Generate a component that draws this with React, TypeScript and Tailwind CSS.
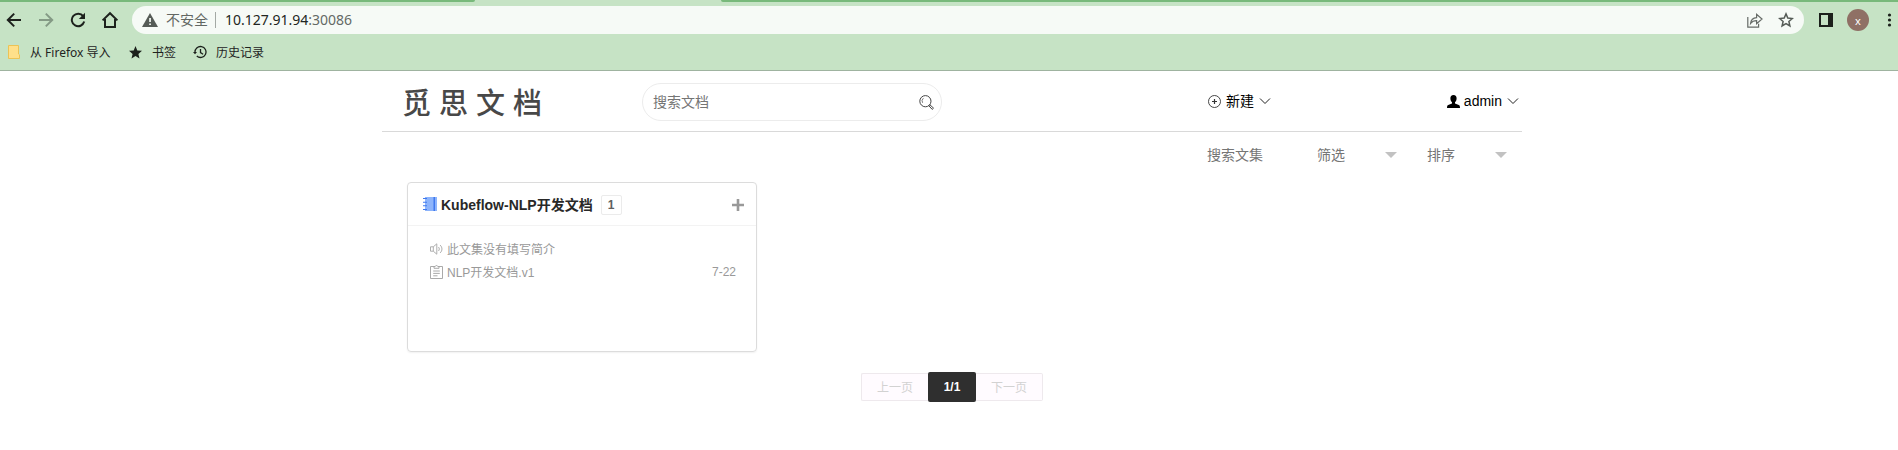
import React from "react";

type IconProps = { className?: string };

const Chevron = ({ className = "" }: IconProps) => (
  <svg className={className} width="12" height="12" viewBox="0 0 12 12" fill="none" stroke="#222" strokeWidth="1">
    <path d="M1 3.5 6 8.5 11 3.5" />
  </svg>
);

const Toolbar = () => (
  <div className="flex h-[34px] items-center pt-[6px]">
    <svg className="ml-[6px] shrink-0" width="16" height="16" viewBox="0 0 16 16" fill="none" stroke="#1c211c" strokeWidth="2">
      <path d="M15 8H2M8.2 1.6 1.8 8l6.4 6.4" />
    </svg>
    <svg className="ml-[16px] shrink-0" width="16" height="16" viewBox="0 0 16 16" fill="none" stroke="#849a85" strokeWidth="2">
      <path d="M1 8h13M7.8 1.6 14.2 8l-6.4 6.4" />
    </svg>
    <svg className="ml-[16px] shrink-0" width="16" height="16" viewBox="0 0 16 16" fill="none">
      <path d="M13.2 4.2A6.3 6.3 0 1 0 14.2 9.6" stroke="#1c211c" strokeWidth="2" />
      <path d="M15 0.8V7H8.8z" fill="#1c211c" />
    </svg>
    <svg className="ml-[15px] shrink-0" width="18" height="18" viewBox="0 0 18 18" fill="none" stroke="#1c211c" strokeWidth="2">
      <path d="M1.6 9.4 9 2.2l7.4 7.2M4 8v8h10V8" />
    </svg>
    <div className="ml-[13px] flex h-[28px] w-[1672px] shrink-0 items-center rounded-full bg-[#f6faf6]">
      <svg className="ml-[10px]" width="16" height="14" viewBox="0 0 16 14">
        <path d="M8 0 16 14H0z" fill="#555b56" />
        <path d="M7.2 5h1.7v4H7.2zM7.2 10.4h1.7V12H7.2z" fill="#f6faf6" />
      </svg>
      <span className="ml-[8px] w-[42px] whitespace-nowrap text-[14px] leading-[20px] text-[#626763]">不安全</span>
      <span className="ml-[7px] h-[16px] w-px bg-[#a3a9a4]" />
      <span className="ml-[9px] whitespace-nowrap text-[14px] leading-[20px] text-[#222622]">
        10.127.91.94<span className="text-[#646965]">:30086</span>
      </span>
      <svg className="ml-auto" width="16" height="15" viewBox="0 0 16 15" fill="none" stroke="#666b67" strokeWidth="1.2">
        <path d="M.8 4v10.2h10.8v-3.4M3.6 10.4c.4-4 2.6-5.6 6-5.8V1.4L15 6l-5.4 4.6V7.7c-2.6 0-4.4.6-6 2.7z" />
      </svg>
      <svg className="ml-[15px] mr-[10px]" width="16" height="16" viewBox="0 0 16 16" fill="none" stroke="#555b56" strokeWidth="1.5">
        <path d="m8 1.9 1.8 4.2 4.6.4-3.5 3 1 4.5L8 11.6 4.1 14l1-4.5-3.5-3 4.6-.4z" />
      </svg>
    </div>
    <svg className="ml-[15px] shrink-0" width="14" height="14" viewBox="0 0 14 14">
      <path d="M1 1h12v12H1z" fill="none" stroke="#1c211c" strokeWidth="2" />
      <path d="M9 1h4v12H9z" fill="#1c211c" />
    </svg>
    <span className="ml-[14px] flex size-[22px] shrink-0 items-center justify-center rounded-full bg-[#8f7065] text-[11px] leading-none text-white">
      x
    </span>
    <svg className="ml-[18px] shrink-0" width="5" height="14" viewBox="0 0 5 14" fill="#1c211c">
      <circle cx="2.5" cy="2" r="1.6" />
      <circle cx="2.5" cy="7" r="1.6" />
      <circle cx="2.5" cy="12" r="1.6" />
    </svg>
  </div>
);

const Bookmarks = () => (
  <div className="flex h-[36px] items-center whitespace-nowrap text-[12px] leading-[18px] text-[#1f241f]">
    <svg className="ml-[8px]" width="12" height="14" viewBox="0 0 12 14">
      <path d="M.5.5h10V9l1 .8v3.7H.5z" fill="#ffe08a" stroke="#ecc355" />
    </svg>
    <span className="ml-[10px] mt-px w-[81px]">从 Firefox 导入</span>
    <svg className="ml-[18px]" width="13" height="13" viewBox="0 0 13 13" fill="#1c211c">
      <path d="m6.5 0 1.8 4.4 4.7.4-3.6 3.1 1.1 4.6-4-2.5-4 2.5 1.1-4.6L0 4.8l4.7-.4z" />
    </svg>
    <span className="ml-[10px] mt-px w-[24px]">书签</span>
    <svg className="ml-[17px]" width="14" height="14" viewBox="0 0 14 14" fill="none" stroke="#1c211c" strokeWidth="1.3">
      <path d="M2 7.5A5.5 5.5 0 1 1 3.8 11.1M7.5 4v3.6l2.6 1.6" />
      <path d="M0 7h4L2 9.2z" fill="#1c211c" stroke="none" />
    </svg>
    <span className="ml-[9px] mt-px">历史记录</span>
  </div>
);

const Browser = () => (
  <div className="h-[71px] border-b border-[#9fb3a0] bg-[#c6e3c5] font-['Noto_Sans','Noto_Sans_CJK_SC',sans-serif]">
    <div className="-mb-[2px] flex h-[2px] justify-between">
      <div className="w-[475px] rounded-br-[3px] bg-[#78b97b]" />
      <div className="w-[1177px] rounded-bl-[3px] bg-[#78b97b]" />
    </div>
    <Toolbar />
    <Bookmarks />
  </div>
);

const Header = () => (
  <header className="flex h-[61px] items-center border-b border-[#d9d9d9] text-[14px] leading-[20px] text-black">
    <h1 className="ml-[20px] mt-[5px] w-[148px] whitespace-nowrap text-[29px] font-medium leading-[40px] tracking-[8px] text-[#484848]">
      觅思文档
    </h1>
    <div className="ml-[92px] mt-[2px] flex h-[38px] w-[300px] items-center rounded-[19px] border border-[#ececec] pl-[10px] pr-[7px] text-[#757575]">
      <span>搜索文档</span>
      <svg className="ml-auto mt-px" width="15" height="15" viewBox="0 0 15 15" fill="none" stroke="#444" strokeWidth="1">
        <circle cx="6.4" cy="6.2" r="5.6" />
        <path d="M4.4 3.2a3.6 3.6 0 0 0-.8 4.6" strokeWidth=".7" />
        <path d="m9.8 10.7 1-1 3.7 3.4-1.3 1.3z" />
      </svg>
    </div>
    <div className="ml-[266px] flex items-center">
      <svg width="13" height="13" viewBox="0 0 13 13" fill="none" stroke="#333" strokeWidth=".9">
        <circle cx="6.5" cy="6.5" r="6" />
        <path d="M6.5 4v5M4 6.5h5" strokeWidth="1.2" />
      </svg>
      <span className="ml-[5px]">新建</span>
      <Chevron className="ml-[5px]" />
    </div>
    <div className="ml-auto mr-[3px] flex items-center">
      <svg width="13" height="13" viewBox="0 0 13 13" fill="#000">
        <path d="M6.5 0C8.6 0 9.7 1.4 9.6 3.4 9.5 5 9 6.4 8 7.2v1.2l3.8 1.5c.8.3 1.2 1 1.2 3.1H0c0-2.1.4-2.8 1.2-3.1L5 8.4V7.2C4 6.4 3.5 5 3.4 3.4 3.3 1.4 4.4 0 6.5 0z" />
      </svg>
      <span className="ml-[4px]">admin</span>
      <Chevron className="ml-[5px]" />
    </div>
  </header>
);

const Select = ({ label }: { label: string }) => (
  <div className="flex w-[110px] shrink-0 items-center justify-between pr-[30px]">
    <span>{label}</span>
    <svg width="12" height="6" viewBox="0 0 12 6" fill="#c2c2c2">
      <path d="M0 0h12L6 6z" />
    </svg>
  </div>
);

const Filters = () => (
  <div className="ml-[825px] flex h-[46px] items-center text-[14px] leading-[20px] text-[#757575]">
    <span className="w-[110px] shrink-0">搜索文集</span>
    <Select label="筛选" />
    <Select label="排序" />
  </div>
);

const Card = () => (
  <section className="ml-[25px] mt-[4px] h-[170px] w-[350px] rounded-[4px] border border-[#dcdcdc] shadow-[0_1px_2px_rgba(0,0,0,0.06)]">
    <div className="flex h-[43px] items-center border-b border-[#f3f3f3] pl-[15px] pr-[12px]">
      <svg width="14" height="14" viewBox="0 0 14 14">
        <path d="M2 0h12v14H2z" fill="#8db4fb" />
        <path d="M10.5 0H12v14h-1.5z" fill="#3f78ee" />
        <path d="M0 1.5h4M0 5.2h4M0 8.8h4M0 12.5h4" stroke="#3f78ee" strokeWidth="1.1" />
      </svg>
      <h2 className="ml-[4px] mt-px whitespace-nowrap text-[14px] font-bold leading-[20px] text-[#282828]">Kubeflow-NLP开发文档</h2>
      <span className="ml-[8px] mt-[2px] flex h-[20px] w-[21px] items-center justify-center rounded-[2px] border border-[#ebebeb] text-[12px] font-bold text-[#606060]">
        1
      </span>
      <svg className="ml-auto mt-px" width="12" height="12" viewBox="0 0 12 12" stroke="#999" strokeWidth="2.6">
        <path d="M6 0v12M0 6h12" />
      </svg>
    </div>
    <div className="pl-[22px] pr-[20px] pt-[13px] text-[12px] leading-[23px] text-[#999]">
      <div className="flex h-[23px] items-center">
        <svg className="-mt-[3px] mr-[4px]" width="13" height="12" viewBox="0 0 13 12" fill="none" stroke="#a5a5a5" strokeWidth=".9">
          <path d="M.5 3.8h2.8L6.8.8v10.4L3.3 8.2H.5zM3.3 3.8v4.4M8.4 4c1.2 1.1 1.2 2.9 0 4M10 2c2.6 2.2 2.6 5.8 0 8" />
        </svg>
        <span>此文集没有填写简介</span>
      </div>
      <div className="flex h-[23px] items-center">
        <svg className="-mt-[3px] mr-[4px]" width="13" height="14" viewBox="0 0 13 14" fill="none" stroke="#a0a0a0" strokeWidth=".9">
          <path d="M4 1.5H.5v12h12v-12H9M4 3.3V1.5h1.2c.2-1.3 2.4-1.3 2.6 0H9v1.8zM3.2 6h6.6M3.2 8.4h6.6M3.2 10.8h4.3" />
        </svg>
        <span>NLP开发文档.v1</span>
        <span className="ml-auto -mt-[3px]">7-22</span>
      </div>
    </div>
  </section>
);

const Pager = () => (
  <nav className="ml-[479px] mt-[20px] flex h-[30px] w-[182px] items-center text-[12px] text-[#d2d2d2]">
    <span className="flex h-[28px] w-[67px] items-center justify-center rounded-l-[2px] border border-r-0 border-[#eee9ed] bg-[#fffbff] pt-px">上一页</span>
    <span className="flex h-[30px] w-[48px] items-center justify-center rounded-[2px] bg-[#2f2f2f] font-bold text-white">1/1</span>
    <span className="flex h-[28px] w-[67px] items-center justify-center rounded-r-[2px] border border-l-0 border-[#eee9ed] bg-[#fffbff] pt-px">下一页</span>
  </nav>
);

export default function App() {
  return (
    <div className="h-[450px] w-[1898px] overflow-hidden bg-white">
      <Browser />
      <main className="ml-[382px] w-[1140px] font-['Liberation_Sans','Noto_Sans_CJK_SC',sans-serif]">
        <Header />
        <Filters />
        <Card />
        <Pager />
      </main>
    </div>
  );
}
